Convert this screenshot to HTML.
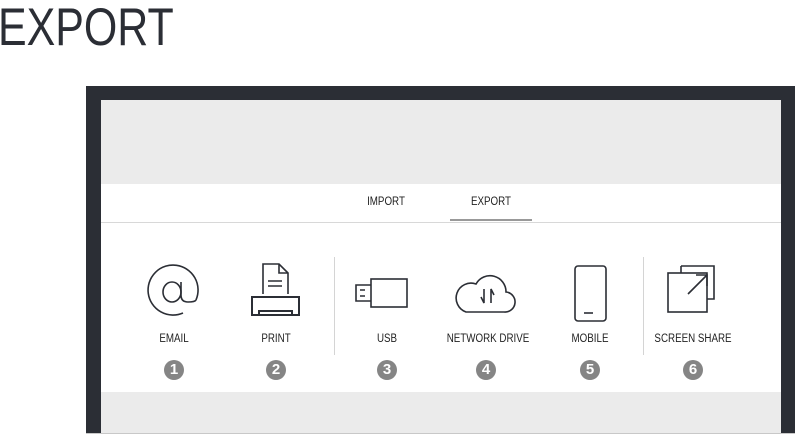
<!DOCTYPE html>
<html><head><meta charset="utf-8"><style>
body{margin:0;width:799px;height:434px;background:#fff;position:relative;overflow:hidden;font-family:"Liberation Sans",sans-serif;color:#2b2e35}
.t{position:absolute;left:-2px;top:-3px;font-size:53px;transform:scaleX(.81);transform-origin:0 0;letter-spacing:0}
.frame{position:absolute;left:86px;top:86px;width:709px;height:348px;background:#2b2e35}
.in{position:absolute;left:101px;top:100px;width:680px;height:333px;background:#ebebeb}
.bl{position:absolute;left:86px;top:433px;width:709px;height:1px;background:#c8c8c8}
.white{position:absolute;left:101px;top:184px;width:680px;height:208px;background:#fff}
.sep{position:absolute;left:101px;top:222px;width:680px;height:1px;background:#d8d8d8}
.ul{position:absolute;left:450px;top:219px;width:82px;height:2px;background:#999}
.tab{position:absolute;top:196px;font-size:11.5px;transform:scaleX(.85);transform-origin:50% 0;width:80px;text-align:center;color:#222}
.lbl{position:absolute;top:333px;font-size:11.5px;width:120px;text-align:center;transform:scaleX(.85);transform-origin:50% 0;color:#222}
.n{position:absolute;top:360px;width:20px;height:20px;border-radius:50%;background:#858585;color:#fff;font-weight:bold;font-size:15px;text-align:center;line-height:20px}
.vd{position:absolute;top:257px;width:1px;height:98px;background:#d4d4d4}
svg{position:absolute}
</style></head><body>
<div class="t">EXPORT</div>
<div class="frame"></div><div class="in"></div><div class="bl"></div><div class="white"></div>
<div class="sep"></div><div class="ul"></div>
<div class="tab" style="left:346px">IMPORT</div>
<div class="tab" style="left:451px">EXPORT</div>
<div class="vd" style="left:334px"></div><div class="vd" style="left:643px"></div>
<svg width="799" height="434" style="left:0;top:0" fill="none" stroke="#2b2e35" stroke-width="1.6">
<!-- email -->
<path d="M196 300 A25 25 0 1 0 183 313"/>
<ellipse cx="172" cy="292" rx="9" ry="10"/>
<path d="M181 282 v13 q0 7 7 7 q7 0 8 -2"/>
<!-- print -->
<path d="M263 294 v-30 h16 l9 9 v21"/><path d="M279 264 v9 h9"/>
<path d="M268 281 h14 M268 286 h14" />
<path d="M252 297 h47 v18 h-47 z" stroke-width="2"/><path d="M259 315 v-4 h33 v4" stroke-width="2"/>
<!-- usb -->
<rect x="371" y="279" width="36" height="28"/><path d="M371 285 h-15 v16 h15"/><path d="M360 290 h5 M360 296 h5"/>
<!-- cloud -->
<path d="M466 312 h38 a10 10 0 0 0 2 -20 a16 16 0 0 0 -30 -8 a12 12 0 0 0 -10 28 z"/>
<path d="M484 289 v14 l-3 -6 M491 303 v-14 l3 6"/>
<!-- mobile -->
<rect x="575" y="266" width="31" height="55" rx="3"/><path d="M584 313 h9"/>
<!-- screen share -->
<path d="M681 266 h33 v33 h-7"/><path d="M681 266 v7"/><rect x="668" y="273" width="39" height="39"/>
<path d="M688 294 l19 -19 M696 275 h11 v11"/>
</svg>
<div class="lbl" style="left:114px">EMAIL</div>
<div class="lbl" style="left:216px">PRINT</div>
<div class="lbl" style="left:327px">USB</div>
<div class="lbl" style="left:428px">NETWORK DRIVE</div>
<div class="lbl" style="left:530px">MOBILE</div>
<div class="lbl" style="left:633px">SCREEN SHARE</div>
<div class="n" style="left:164px">1</div>
<div class="n" style="left:266px">2</div>
<div class="n" style="left:377px">3</div>
<div class="n" style="left:476px">4</div>
<div class="n" style="left:580px">5</div>
<div class="n" style="left:683px">6</div>
</body></html>
